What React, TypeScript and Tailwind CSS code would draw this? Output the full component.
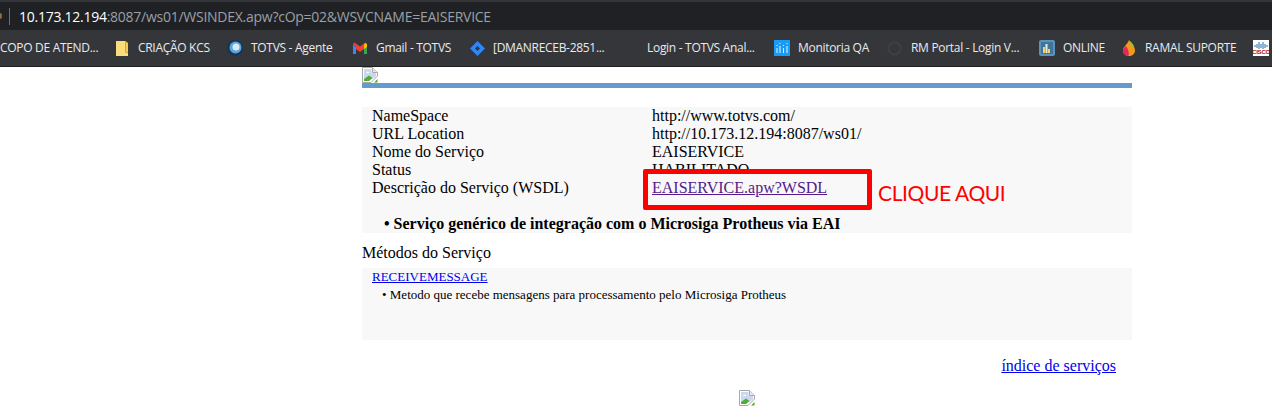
const uiFont = "font-['Open_Sans','Noto_Sans',sans-serif]";

function BrokenImage() {
  return (
    <svg width="16" height="16" viewBox="0 0 16 16" className="block shrink-0">
      <path d="M0.5 0.5H10.5L15.5 5.5V9L9 15.5H0.5Z" fill="#fff" stroke="#a8a8a8" />
      <path d="M10.5 0.5V5.5H15.500" fill="#e8e8e8" stroke="#a8a8a8" />
      <path d="M2 2H9.500V6H14V9.500L10.500 12H2Z" fill="#c9d7f1" />
      <path d="M4 6a1.600 1.600 0 0 1 3.200 0Z" fill="#fff" />
      <path d="M2 14V12L7 8.500L10.500 11L7 14Z" fill="#4caf30" />
      <path d="M12 15.500L15.500 12V15.500Z" fill="#4caf30" />
    </svg>
  );
}

function Folder() {
  return (
    <svg width="12" height="15" viewBox="0 0 12 15" className="block">
      <path d="M0 0H9.500V11.500H12V15H0Z" fill="#fbdc7c" />
      <path d="M9.500 0L12 2V11.500H9.500Z" fill="#f6c94f" />
    </svg>
  );
}

function Globe() {
  return (
    <svg width="16" height="16" viewBox="0 0 16 16" className="block">
      <circle cx="8" cy="8" r="8" fill="#16335c" />
      <circle cx="8.500" cy="7.500" r="6" fill="#5aa5d6" />
      <circle cx="9" cy="7" r="3.500" fill="#dbe9f2" />
    </svg>
  );
}

function Gmail() {
  return (
    <svg width="14" height="12" viewBox="0 0 14 12" className="block">
      <path d="M0 2V12H3V5Z" fill="#4285f4" />
      <path d="M11 5V12H14V2Z" fill="#34a853" />
      <path d="M0 2L7 7.500L14 2L12.500 0.500L7 4.500L1.500 0.500Z" fill="#ea4335" />
      <path d="M3 3V7L7 10L7 6Z" fill="#ea4335" />
      <path d="M11 3V7L7 10V6Z" fill="#ea4335" />
      <path d="M12 1L14 2V5L11 7V3Z" fill="#fbbc04" />
    </svg>
  );
}

function Jira() {
  return (
    <svg width="15" height="15" viewBox="0 0 15 15" className="block">
      <path d="M7.500 0L15 7.500L7.500 15L0 7.500ZM7.500 5L5 7.500L7.500 10L10 7.500Z" fill="#2f86f6" fillRule="evenodd" />
    </svg>
  );
}

function Monitoria() {
  return (
    <svg width="16" height="16" viewBox="0 0 16 16" className="block">
      <rect width="16" height="16" fill="#1a9bf5" />
      <path d="M3 8V13M3 5V6M6 6V13M6 3V4M9.500 8V13M9.500 5V6M13 6V13M13 3V4" stroke="#e8f5ff" strokeWidth="1" />
    </svg>
  );
}

function RmPortal() {
  return (
    <svg width="15" height="15" viewBox="0 0 15 15" className="block">
      <circle cx="7.500" cy="7.500" r="6" fill="none" stroke="#403e3a" strokeWidth="2.500" />
      <circle cx="7.500" cy="7.500" r="1.500" fill="#3a3936" />
    </svg>
  );
}

function Online() {
  return (
    <svg width="16" height="16" viewBox="0 0 16 16" className="block">
      <rect width="16" height="16" rx="2" fill="#5d93b8" />
      <rect x="2" y="2" width="12" height="12" fill="#3f7598" />
      <path d="M4 7H6V13H4ZM9 9H11V13H9Z" fill="#f2d468" />
      <path d="M6.500 4H8.500V13H6.500Z" fill="#e8eef0" />
    </svg>
  );
}

function Ramal() {
  return (
    <svg width="12" height="16" viewBox="0 0 12 16" className="block">
      <path d="M6 0C8 3 12 6 12 10.500C12 14 9 16 6 16C3 16 0 14 0 10.500C0 7 4 5 6 0Z" fill="#f39a1c" />
      <path d="M0 10.500C0 8.500 2 7.500 3 6C5 9 6.500 12 5.500 16C3 16 0 14 0 10.500Z" fill="#e5285a" />
      <path d="M7 1C9 3 11 5 11 7L8 6Z" fill="#8cc63f" />
    </svg>
  );
}

function Cisco() {
  return (
    <div className="flex h-4 w-4 flex-col items-center overflow-hidden bg-white pt-[1px]">
      <svg width="14" height="8" viewBox="0 0 14 8" className="block shrink-0">
        <path d="M1 4V6M3 3V7M5 1V8M7 3V7M9 1V8M11 3V7M13 4V6" stroke="#1f6fa8" strokeWidth="1" />
      </svg>
      <span className="font-['Liberation_Sans',sans-serif] text-[6px] leading-[7px] font-bold tracking-[-0.2px] text-[#a80f18]">
        CISCO
      </span>
    </div>
  );
}

const bookmarks = [
  { label: "COPO DE ATEND...", icon: null, iconBox: "w-0", text: "w-[116px]" },
  { label: "CRIAÇÃO KCS", icon: <Folder />, iconBox: "w-[22px]", text: "w-[89px]" },
  { label: "TOTVS - Agente", icon: <Globe />, iconBox: "w-[24px]", text: "w-[102px]" },
  { label: "Gmail - TOTVS", icon: <Gmail />, iconBox: "w-[23px]", text: "w-[94px]" },
  { label: "[DMANRECEB-2851...", icon: <Jira />, iconBox: "w-[23px]", text: "w-[154px]" },
  { label: "Login - TOTVS Anal...", icon: null, iconBox: "w-0", text: "w-[127px]" },
  { label: "Monitoria QA", icon: <Monitoria />, iconBox: "w-[24px]", text: "w-[89px]" },
  { label: "RM Portal - Login V...", icon: <RmPortal />, iconBox: "w-[24px]", text: "w-[128px]" },
  { label: "ONLINE", icon: <Online />, iconBox: "w-[24px]", text: "w-[60px]" },
  { label: "RAMAL SUPORTE", icon: <Ramal />, iconBox: "w-[22px]", text: "w-[108px]" },
];

const infoRows = [
  ["NameSpace", "http://www.totvs.com/"],
  ["URL Location", "http://10.173.12.194:8087/ws01/"],
  ["Nome do Serviço", "EAISERVICE"],
  ["Status", "HABILITADO"],
];

export default function App() {
  return (
    <div className="h-[419px] w-[1272px] overflow-hidden bg-white font-['Liberation_Serif',serif] text-black">
      {/* browser chrome */}
      <div className={`${uiFont} h-[67px] border-b border-[#1d1e20] bg-[#35363a] pt-[2px]`}>
        <div className="flex h-[28px] items-center bg-[#202124]">
          <div className="h-[6px] w-[2px] rounded-r-full bg-[#8a6a3a]" />
          <div className="ml-[7px] h-[17px] w-px bg-[#6b6d70]" />
          <div className="ml-[9px] text-[14px] tracking-[-0.26px] text-[#9aa0a6]">
            <span className="text-white">10.173.12.194</span>
            :8087/ws01/WSINDEX.apw?cOp=02&amp;WSVCNAME=EAISERVICE
          </div>
        </div>
        <div className="flex h-[36px] items-center overflow-hidden text-[12px] tracking-[-0.3px] text-[#e8eaed]">
          {bookmarks.map((b) => (
            <div key={b.label} className="flex shrink-0 items-center">
              <div className={`${b.iconBox} shrink-0`}>{b.icon}</div>
              <span className={`${b.text} block whitespace-nowrap`}>{b.label}</span>
            </div>
          ))}
          <Cisco />
        </div>
      </div>

      {/* page */}
      <div className="relative ml-[362px] w-[770px]">
        <BrokenImage />
        <div className="h-[5px] bg-[#6699cc]" />

        <div className="relative mt-[19px] h-[126px] bg-[#f8f8f8] pl-[10px] text-[16px] leading-[18px]">
          {infoRows.map(([k, v]) => (
            <div key={k} className="grid grid-cols-[280px_1fr]">
              <span>{k}</span>
              <span>{v}</span>
            </div>
          ))}
          <div className="grid grid-cols-[280px_1fr]">
            <span>Descrição do Serviço (WSDL)</span>
            <a className="relative z-10 w-fit text-[#551a8b] underline" href="#wsdl">
              EAISERVICE.apw?WSDL
            </a>
          </div>
          <div className="mt-[18px] pl-[12px] font-bold">• Serviço genérico de integração com o Microsiga Protheus via EAI</div>

          {/* red annotation drawn over the page */}
          <div className="absolute top-[62px] left-[281px] h-[41px] w-[229px] rounded-[2px] border-[5px] border-[#ff0000] bg-[#f8f8f8]" />
          <div className="absolute top-[71px] left-[516px] font-['Lato',sans-serif] text-[21px] leading-[30px] tracking-[-0.4px] whitespace-nowrap text-[#ff0000]">
            CLIQUE AQUI
          </div>
        </div>

        <div className="mt-[11px] text-[16px] leading-[18px]">Métodos do Serviço</div>

        <div className="mt-[6px] h-[72px] bg-[#f8f8f8] pl-[10px] text-[13px] leading-[18px]">
          <a className="block w-fit text-[#0000ee] underline" href="#receive">
            RECEIVEMESSAGE
          </a>
          <div className="pl-[10px]">• Metodo que recebe mensagens para processamento pelo Microsiga Protheus</div>
        </div>

        <div className="mt-[17px] flex justify-end pr-[16px] text-[16px] leading-[18px]">
          <a className="text-[#0000ee] underline" href="#indice">
            índice de serviços
          </a>
        </div>

        <div className="mt-[15px] flex justify-center">
          <BrokenImage />
        </div>
      </div>
    </div>
  );
}
